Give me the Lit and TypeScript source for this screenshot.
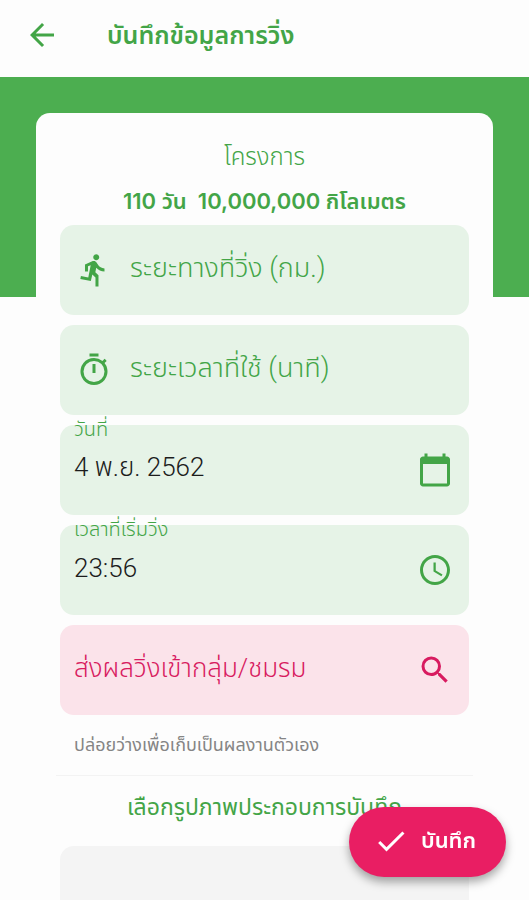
import { LitElement, html, css, svg } from "lit";
import { customElement, property } from "lit/decorators.js";

const icons = {
  back: svg`<path d="M20 11H7.8l5.6-5.6L12 4l-8 8 8 8 1.4-1.4L7.8 13H20v-2z"/>`,
  run: svg`<path d="M13.49 5.48c1.1 0 2-.9 2-2s-.9-2-2-2-2 .9-2 2 .9 2 2 2zm-3.6 13.9l1-4.4 2.1 2v6h2v-7.5l-2.1-2 .6-3c1.3 1.5 3.3 2.5 5.5 2.5v-2c-1.9 0-3.5-1-4.3-2.4l-1-1.6c-.4-.6-1-1-1.7-1-.3 0-.5.1-.8.1l-5.2 2.2v4.7h2v-3.4l1.8-.7-1.6 8.1-4.9-1-.4 2 7 1.4z"/>`,
  timer: svg`<path d="M15 1H9v2h6V1zm-4 13h2V8h-2v6zm8.03-6.61l1.42-1.42c-.43-.51-.9-.99-1.41-1.41l-1.42 1.42A8.96 8.96 0 0 0 12 4a9 9 0 1 0 7.03 3.39zM12 20a7 7 0 1 1 0-14 7 7 0 0 1 0 14z"/>`,
  calendar: svg`<path d="M20 3h-1V1h-2v2H7V1H5v2H4c-1.1 0-2 .9-2 2v16c0 1.1.9 2 2 2h16c1.1 0 2-.9 2-2V5c0-1.100-.9-2-2-2zm0 18H4V8h16v13z"/>`,
  clock: svg`<path d="M11.990 2C6.470 2 2 6.480 2 12s4.470 10 9.990 10C17.520 22 22 17.520 22 12S17.520 2 11.990 2zM12 20a8 8 0 1 1 0-16 8 8 0 0 1 0 16zm.5-13H11v6l5.250 3.150.75-1.230-4.500-2.670z"/>`,
  search: svg`<path d="M15.500 14h-.79l-.28-.27A6.471 6.471 0 0 0 16 9.500 6.500 6.500 0 1 0 9.500 16c1.610 0 3.090-.59 4.230-1.570l.27.28v.79l5 4.990L20.490 19l-4.990-5zm-6 0a4.500 4.500 0 1 1 0-9 4.500 4.500 0 0 1 0 9z"/>`,
  check: svg`<path d="M9 16.170L4.830 12l-1.420 1.410L9 19 21 7l-1.410-1.410z"/>`,
};

type IconName = keyof typeof icons;

@customElement("run-icon")
class RunIcon extends LitElement {
  @property() name: IconName = "back";

  static styles = css`
    :host {
      display: block;
      flex: none;
      width: 36px;
      height: 36px;
    }
    .glyph {
      display: block;
      width: 100%;
      height: 100%;
      fill: currentColor;
    }
  `;

  render() {
    return html`<svg class="glyph" viewBox="0 0 24 24" aria-hidden="true">${icons[this.name]}</svg>`;
  }
}

@customElement("app-root")
class AppRoot extends LitElement {
  static styles = css`
    :host {
      --green: #43a547;
      --pink: #e91e63;
      display: flex;
      flex-direction: column;
      height: 100vh;
      background: #fdfdfd;
      color: var(--green);
      font-family: "Inter", "Noto Sans Thai", "Noto Sans", sans-serif;
      font-size: 24px;
    }
    * {
      box-sizing: border-box;
    }
    button {
      border: 0;
      padding: 0;
      background: none;
      color: inherit;
      font: inherit;
      cursor: pointer;
    }
    .bar {
      flex: none;
      display: flex;
      align-items: center;
      gap: 47px;
      height: 77px;
      padding: 0 24px 8px;
    }
    .title {
      margin: 0;
      font-size: 25px;
      font-weight: 600;
      line-height: 40px;
    }
    .page {
      flex: 1;
      min-height: 0;
      overflow-y: auto;
      scrollbar-width: none;
      padding: 36px 36px 0;
      background: linear-gradient(#4cae50, #4cae50) top / 100% 220px no-repeat;
    }
    .card {
      padding: 26px 24px 24px;
      border-radius: 14px;
      background: #fdfdfd;
    }
    .project {
      margin: 0 0 6px;
      text-align: center;
      line-height: 36px;
    }
    .caption {
      display: block;
      font-weight: 300;
    }
    .goal {
      display: block;
      margin-top: 8px;
      font-size: 22px;
      font-weight: 600;
      white-space: pre;
    }
    .fields {
      display: grid;
      grid-template-columns: minmax(0, 1fr);
      gap: 10px;
    }
    .field {
      position: relative;
      display: flex;
      align-items: center;
      height: 90px;
      padding: 0 16px 0 14px;
      border-radius: 14px;
      background: #e6f3e7;
    }
    .field.metric {
      gap: 18px;
      padding-left: 16px;
    }
    .field.group {
      background: #fbe3ea;
      color: #d81b60;
    }
    .input {
      flex: 1;
      min-width: 0;
      height: 60px;
      padding: 0 0 4px;
      border: 0;
      outline: 0;
      background: none;
      color: #1c1c1c;
      font-family: "Roboto", "Noto Sans Thai", "Noto Sans", sans-serif;
      font-size: 26px;
      font-weight: 300;
    }
    .metric .input {
      font-size: 27px;
    }
    .input::placeholder {
      color: var(--green);
      opacity: 1;
    }
    .group .input::placeholder {
      color: #d81b60;
    }
    .label {
      position: absolute;
      top: -12px;
      left: 14px;
      font-size: 20px;
      font-weight: 300;
      line-height: 32px;
    }
    .hint {
      margin: 0 -4px;
      padding: 16px 18px;
      border-bottom: 1px solid #f3f3f3;
      color: #858585;
      font-size: 18px;
      font-weight: 400;
      line-height: 28px;
    }
    .pick {
      margin: 14px 0 22px;
      font-size: 23px;
      font-weight: 400;
      line-height: 34px;
      text-align: center;
    }
    .photo {
      display: block;
      width: 100%;
      height: 240px;
      border-radius: 14px;
      background: #f4f4f4;
    }
    .save {
      position: fixed;
      right: 23px;
      bottom: 23px;
      display: flex;
      align-items: center;
      gap: 12px;
      height: 70px;
      padding: 0 30px 2px 24px;
      border-radius: 35px;
      background: var(--pink);
      color: #fff;
      font-size: 22px;
      font-weight: 600;
      box-shadow: 0 5px 10px rgba(0, 0, 0, 0.35);
    }
  `;

  render() {
    return html`
      <header class="bar">
        <button class="back" aria-label="ย้อนกลับ"><run-icon name="back"></run-icon></button>
        <h1 class="title">บันทึกข้อมูลการวิ่ง</h1>
      </header>
      <main class="page">
        <form class="card">
          <p class="project">
            <span class="caption">โครงการ</span>
            <strong class="goal">110 วัน  10,000,000 กิโลเมตร</strong>
          </p>
          <div class="fields">
            <div class="field metric">
              <run-icon name="run"></run-icon>
              <input class="input" aria-label="ระยะทางที่วิ่ง (กม.)" placeholder="ระยะทางที่วิ่ง (กม.)" />
            </div>
            <div class="field metric">
              <run-icon name="timer"></run-icon>
              <input class="input" aria-label="ระยะเวลาที่ใช้ (นาที)" placeholder="ระยะเวลาที่ใช้ (นาที)" />
            </div>
            <div class="field">
              <label class="label" for="date">วันที่</label>
              <input class="input" id="date" .value=${"4 พ.ย. 2562"} />
              <run-icon name="calendar"></run-icon>
            </div>
            <div class="field">
              <label class="label" for="time">เวลาที่เริ่มวิ่ง</label>
              <input class="input" id="time" .value=${"23:56"} />
              <run-icon name="clock"></run-icon>
            </div>
            <div class="field group">
              <input class="input" aria-label="ส่งผลวิ่งเข้ากลุ่ม/ชมรม" placeholder="ส่งผลวิ่งเข้ากลุ่ม/ชมรม" />
              <run-icon name="search"></run-icon>
            </div>
          </div>
          <p class="hint">ปล่อยว่างเพื่อเก็บเป็นผลงานตัวเอง</p>
          <h2 class="pick">เลือกรูปภาพประกอบการบันทึก</h2>
          <button class="photo" type="button" aria-label="เลือกรูปภาพ"></button>
        </form>
      </main>
      <button class="save"><run-icon name="check"></run-icon>บันทึก</button>
    `;
  }
}
